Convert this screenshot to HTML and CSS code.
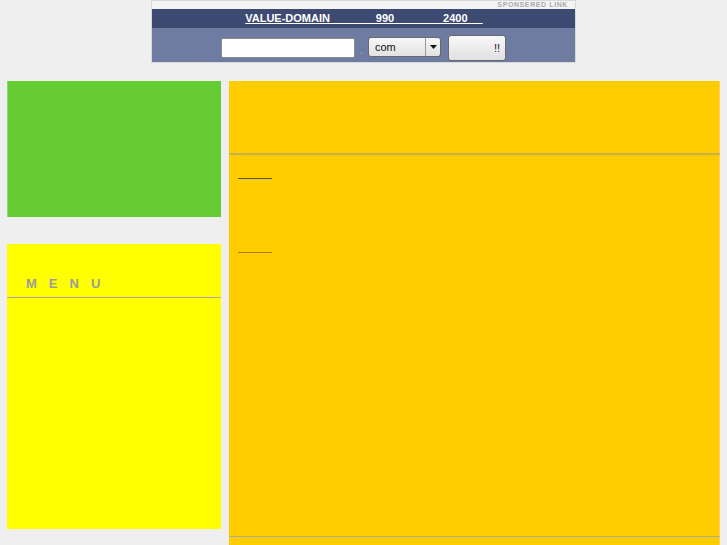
FILE: index.html
```html
<!DOCTYPE html>
<html>
<head>
<meta charset="utf-8">
<link rel="stylesheet" href="styles.css">
</head>
<body>
<div class="banner">
  <div class="strip"><span class="sponsor">SPONSERED LINK</span></div>
  <div class="dark"><a class="vd" href="#">VALUE-DOMAIN               990                2400     </a></div>
  <div class="lower">
    <span class="field"></span>
    <span class="dot">.</span>
    <span class="select"><span class="sel-text">com</span><span class="sel-arrow"><svg width="7" height="4" viewBox="0 0 7 4"><path d="M0 0H7L3.5 4Z" fill="#111"/></svg></span></span>
    <span class="btn">!!</span>
  </div>
</div>
<div class="page">
  <div class="side">
    <div class="green"></div>
    <div class="menu">
      <div class="menu-title">MENU</div>
    </div>
  </div>
  <div class="main">
    <div class="main-head"></div>
    <div class="main-body">
      <a class="ul ul-dark" href="#"></a>
      <a class="ul ul-olive" href="#"></a>
    </div>
    <div class="main-foot"></div>
  </div>
</div>
</body>
</html>
```

FILE: styles.css
```css
html, body {
  margin: 0;
  padding: 0;
  background: #efefef;
  font-family: "Liberation Sans", Arial, sans-serif;
}
.banner {
  width: 425px;
  margin: 0 auto;
  box-sizing: border-box;
  border: 1px solid #d9d9d9;
  background: #f4f4f4;
}
.strip {
  height: 8px;
  display: flex;
  justify-content: flex-end;
  align-items: center;
  padding-right: 7px;
}
.sponsor {
  font-size: 7px;
  font-weight: bold;
  letter-spacing: 0.6px;
  color: #a9a9a9;
  line-height: 8px;
}
.dark {
  height: 19px;
  background: #3d4b73;
  display: flex;
  justify-content: center;
  align-items: center;
}
.vd {
  color: #ffffff;
  font-size: 11px;
  font-weight: bold;
  white-space: pre;
  text-decoration: underline;
  line-height: 13px;
  margin-left: 1px;
}
.lower {
  height: 34px;
  background: #6e7ca2;
  display: flex;
  justify-content: center;
  align-items: center;
  padding-top: 6px;
  box-sizing: border-box;
}
.field {
  width: 134px;
  height: 20px;
  box-sizing: border-box;
  background: #fff;
  border: 1px solid #8a8a8a;
  border-radius: 2px;
}
.dot {
  width: 13px;
  text-align: center;
  color: #b8bcc8;
  font-size: 10px;
  line-height: 10px;
  align-self: center;
  padding-top: 6px;
}
.select {
  width: 73px;
  height: 20px;
  box-sizing: border-box;
  border: 1px solid #6a6a6a;
  border-radius: 3px;
  background: linear-gradient(#f6f6f6, #e2e2e2);
  display: flex;
  align-items: center;
  margin-top: -2px;
}
.sel-text {
  flex: 1;
  font-size: 11px;
  color: #111;
  padding-left: 6px;
}
.sel-arrow {
  width: 14px;
  height: 100%;
  border-left: 1px solid #9a9a9a;
  display: flex;
  align-items: center;
  justify-content: center;
}
.btn {
  width: 58px;
  height: 26px;
  box-sizing: border-box;
  margin-left: 7px;
  border: 1px solid #6a6a6a;
  border-radius: 3px;
  background: linear-gradient(#f8f8f8, #e0e0e0);
  font-size: 11px;
  color: #222;
  display: flex;
  align-items: center;
  justify-content: flex-end;
  padding-right: 5px;
}
.page {
  display: flex;
  gap: 8px;
  padding-left: 7px;
  margin-top: 18px;
}
.side {
  width: 214px;
  display: flex;
  flex-direction: column;
  gap: 27px;
}
.green {
  height: 136px;
  background: #66cc33;
  box-shadow: inset 1px 0 0 #8ed86a;
}
.menu {
  height: 285px;
  background: #ffff00;
}
.menu-title {
  margin-top: 32px;
  padding-left: 19px;
  padding-bottom: 6px;
  border-bottom: 1px solid #a9a9a9;
  font-size: 13px;
  font-weight: bold;
  color: #9c9c9c;
  letter-spacing: 12px;
  line-height: 15px;
}
.main {
  width: 491px;
  background: #ffcc00;
  display: flex;
  flex-direction: column;
  box-shadow: inset -1px 0 0 #ffd84a;
}
.main-head {
  height: 72px;
  border-bottom: 2px solid #c8af52;
}
.main-body {
  height: 381px;
  padding-left: 9px;
  display: flex;
  flex-direction: column;
}
.ul {
  display: block;
  width: 34px;
  height: 0;
}
.ul-dark {
  margin-top: 23px;
  border-top: 1px solid #555;
}
.ul-olive {
  margin-top: 73px;
  border-top: 1px solid #a38200;
}
.main-foot {
  border-top: 1px solid #aaaaaa;
  height: 9px;
}
```
